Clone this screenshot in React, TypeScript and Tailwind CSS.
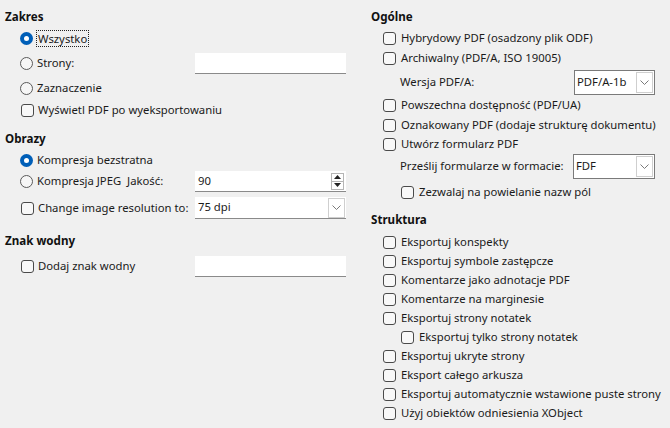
import React from "react";

const font = { fontFamily: '"Segoe UI", "Noto Sans", sans-serif' };

function Radio({ checked }: { checked?: boolean }) {
  return checked ? (
    <span className="w-[13px] h-[13px] rounded-full bg-[#005fb8] flex items-center justify-center shrink-0">
      <span className="w-[5px] h-[5px] rounded-full bg-white" />
    </span>
  ) : (
    <span className="w-[13px] h-[13px] rounded-full border border-[#5a5a5a] bg-[#f6f6f6] shrink-0" />
  );
}

function Check() {
  return <span className="w-[13px] h-[13px] rounded-[3px] border border-[#4a4a4a] bg-[#f8f8f8] shrink-0" />;
}

function Chevron() {
  return (
    <svg width="9" height="5" viewBox="0 0 9 5" fill="none">
      <path d="M0.5 0.5 L4.5 4.5 L8.5 0.5" stroke="#7a7a7a" strokeWidth="1" />
    </svg>
  );
}

function Heading({ children }: { children: React.ReactNode }) {
  return <div className="h-[20px] flex items-center font-bold text-[#111] text-[11.6px]">{children}</div>;
}

function CheckRow({ label, indent }: { label: string; indent?: boolean }) {
  return (
    <div className={`h-[19px] flex items-center gap-[5px] ${indent ? "pl-[30px]" : "pl-[12px]"}`}>
      <Check />
      <span>{label}</span>
    </div>
  );
}

export default function App() {
  return (
    <div className="w-[670px] h-[428px] bg-[#f0f0f0] text-[11.3px] text-[#1a1a1a] flex overflow-hidden whitespace-nowrap" style={font}>
      {/* left column */}
      <div className="w-[360px] pl-[5px] pt-[7px] flex flex-col">
        <Heading>Zakres</Heading>
        <div className="h-[22px] flex items-center pl-[15px] gap-[3px]">
          <Radio checked />
          <span className="border border-dotted border-[#222] px-[1px] leading-[15px]">Wszystko</span>
        </div>
        <div className="h-[22px] mt-[3px] flex items-center pl-[15px] gap-[4px]">
          <Radio />
          <span className="flex-1">Strony:</span>
          <div className="w-[151px] h-[21px] bg-white border-b border-[#8a8a8a] mr-[14px]" />
        </div>
        <div className="h-[22px] mt-[3px] flex items-center pl-[15px] gap-[4px]">
          <Radio />
          <span>Zaznaczenie</span>
        </div>
        <div className="h-[22px] flex items-center pl-[16px] gap-[4px]">
          <Check />
          <span>Wyświetl PDF po wyeksportowaniu</span>
        </div>

        <div className="mt-[8px]">
          <Heading>Obrazy</Heading>
        </div>
        <div className="h-[22px] flex items-center pl-[15px] gap-[4px]">
          <Radio checked />
          <span>Kompresja bezstratna</span>
        </div>
        <div className="h-[21px] flex items-center pl-[15px] gap-[4px]">
          <Radio />
          <span className="flex-1">Kompresja JPEG&nbsp; Jakość:</span>
          <div className="w-[151px] h-[21px] bg-white border-b border-[#8a8a8a] mr-[14px] flex items-center pl-[3px]">
            <span className="flex-1">90</span>
            <div className="w-[13px] h-[17px] mr-[2px] border border-[#b5b5b5] flex flex-col">
              <div className="flex-1 flex items-center justify-center border-b border-[#b5b5b5]">
                <svg width="7" height="4" viewBox="0 0 7 4"><path d="M0 4 L3.5 0 L7 4 Z" fill="#222" /></svg>
              </div>
              <div className="flex-1 flex items-center justify-center">
                <svg width="7" height="4" viewBox="0 0 7 4"><path d="M0 0 L3.5 4 L7 0 Z" fill="#222" /></svg>
              </div>
            </div>
          </div>
        </div>
        <div className="h-[22px] mt-[5px] flex items-center pl-[16px] gap-[4px]">
          <Check />
          <span className="flex-1">Change image resolution to:</span>
          <div className="w-[151px] h-[22px] bg-white border-b border-[#8a8a8a] mr-[14px] flex items-center pl-[3px]">
            <span className="flex-1">75 dpi</span>
            <div className="w-[17px] h-[20px] mr-[1px] border border-[#cfcfcf] flex items-center justify-center">
              <Chevron />
            </div>
          </div>
        </div>

        <div className="mt-[12px]">
          <Heading>Znak wodny</Heading>
        </div>
        <div className="h-[22px] mt-[4px] flex items-center pl-[16px] gap-[4px]">
          <Check />
          <span className="flex-1">Dodaj znak wodny</span>
          <div className="w-[151px] h-[21px] bg-white border-b border-[#8a8a8a] mr-[14px]" />
        </div>
      </div>

      {/* right column */}
      <div className="w-[310px] pl-[11px] pt-[7px] flex flex-col">
        <Heading>Ogólne</Heading>
        <div className="h-[20px] mt-[1px] flex items-center gap-[5px] pl-[12px]"><Check /><span>Hybrydowy PDF (osadzony plik ODF)</span></div>
        <div className="h-[20px] flex items-center gap-[5px] pl-[12px]"><Check /><span>Archiwalny (PDF/A, ISO 19005)</span></div>
        <div className="h-[26px] mt-[1px] flex items-center pl-[29px]">
          <span className="flex-1">Wersja PDF/A:</span>
          <div className="w-[81px] h-[25px] bg-white border border-[#7a7a7a] mr-[15px] flex items-center pl-[2px]">
            <span className="flex-1">PDF/A-1b</span>
            <div className="w-[17px] h-[21px] mr-[1px] border border-[#cfcfcf] flex items-center justify-center">
              <Chevron />
            </div>
          </div>
        </div>
        <div className="h-[20px] flex items-center gap-[5px] pl-[12px]"><Check /><span>Powszechna dostępność (PDF/UA)</span></div>
        <div className="h-[20px] flex items-center gap-[5px] pl-[12px]"><Check /><span>Oznakowany PDF (dodaje strukturę dokumentu)</span></div>
        <div className="h-[19px] flex items-center gap-[5px] pl-[12px]"><Check /><span>Utwórz formularz PDF</span></div>
        <div className="h-[25px] flex items-center pl-[29px]">
          <span className="w-[173px]">Prześlij formularze w formacie:</span>
          <div className="w-[82px] h-[25px] bg-white border border-[#7a7a7a] flex items-center pl-[2px]">
            <span className="flex-1">FDF</span>
            <div className="w-[17px] h-[21px] mr-[1px] border border-[#cfcfcf] flex items-center justify-center">
              <Chevron />
            </div>
          </div>
        </div>
        <div className="h-[20px] mt-[3px] flex items-center gap-[5px] pl-[30px]"><Check /><span>Zezwalaj na powielanie nazw pól</span></div>

        <div className="mt-[8px]">
          <Heading>Struktura</Heading>
        </div>
        <div className="mt-[3px] flex flex-col">
          <CheckRow label="Eksportuj konspekty" />
          <CheckRow label="Eksportuj symbole zastępcze" />
          <CheckRow label="Komentarze jako adnotacje PDF" />
          <CheckRow label="Komentarze na marginesie" />
          <CheckRow label="Eksportuj strony notatek" />
          <CheckRow label="Eksportuj tylko strony notatek" indent />
          <CheckRow label="Eksportuj ukryte strony" />
          <CheckRow label="Eksport całego arkusza" />
          <CheckRow label="Eksportuj automatycznie wstawione puste strony" />
          <CheckRow label="Użyj obiektów odniesienia XObject" />
        </div>
      </div>
    </div>
  );
}
